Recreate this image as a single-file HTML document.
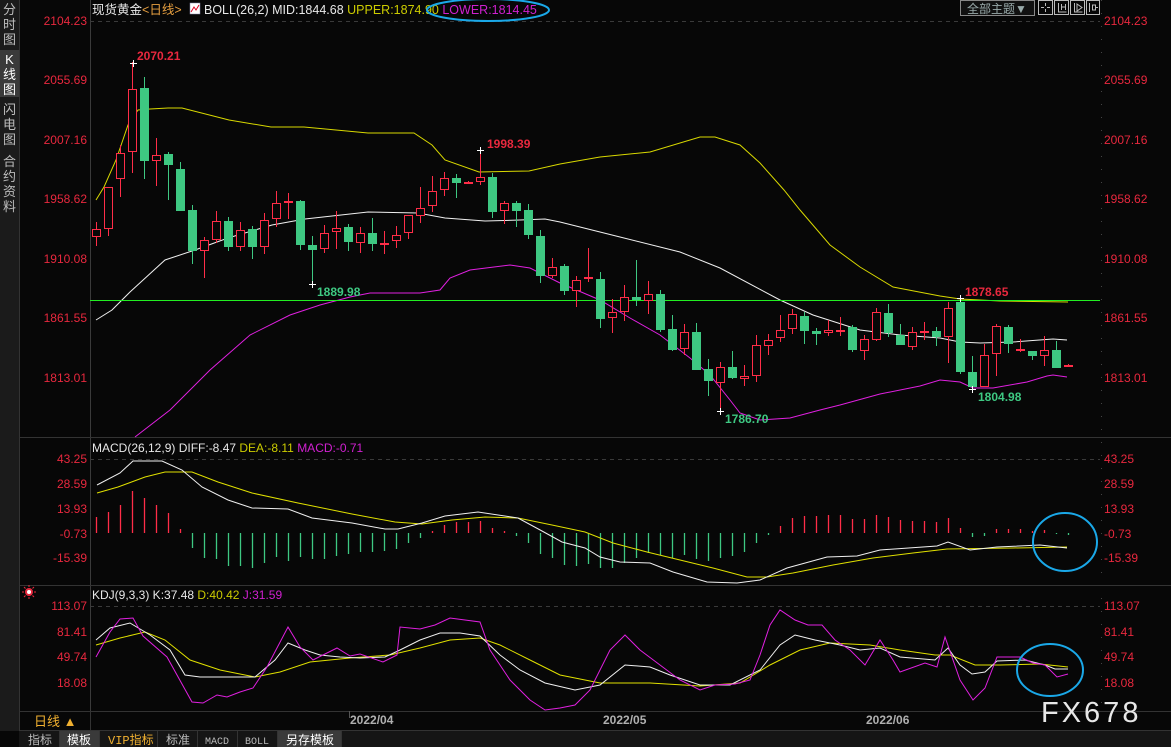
<!DOCTYPE html>
<html><head><meta charset="utf-8"><style>
body{margin:0;background:#070707;width:1171px;height:747px;overflow:hidden;font-family:"Liberation Sans","Noto Sans CJK SC",sans-serif;}
svg{display:block}
</style></head><body>
<svg id="s" width="1171" height="747" xmlns="http://www.w3.org/2000/svg" font-family="Liberation Sans, Noto Sans CJK SC, sans-serif">
<rect width="1171" height="747" fill="#070707"/>
<!-- left sidebar -->
<rect x="0" y="0" width="19" height="731" fill="#1b1b1b"/>
<rect x="0" y="50" width="19" height="47" fill="#3a3a3a"/>
<g fill="#bdbdbd" font-size="13" text-anchor="middle">
<text x="9.5" y="14">分</text><text x="9.5" y="29">时</text><text x="9.5" y="44">图</text>
<text x="9.5" y="64" fill="#fff">K</text><text x="9.5" y="79" fill="#fff">线</text><text x="9.5" y="94" fill="#fff">图</text>
<text x="9.5" y="114">闪</text><text x="9.5" y="129">电</text><text x="9.5" y="144">图</text>
<text x="9.5" y="166">合</text><text x="9.5" y="181">约</text><text x="9.5" y="196">资</text><text x="9.5" y="211">料</text>
</g>
<line x1="19.5" y1="0" x2="19.5" y2="731" stroke="#333"/>
<line x1="90.5" y1="0" x2="90.5" y2="711" stroke="#3a3a3a"/>
<line x1="1101.5" y1="0" x2="1101.5" y2="711" stroke="#444" stroke-dasharray="1,12"/>
<!-- panel separators -->
<line x1="19" y1="437.5" x2="1171" y2="437.5" stroke="#333"/>
<line x1="19" y1="585.5" x2="1171" y2="585.5" stroke="#333"/>
<line x1="19" y1="711.5" x2="1171" y2="711.5" stroke="#333"/>
<line x1="19" y1="730.5" x2="1171" y2="730.5" stroke="#333"/>
<line x1="90" y1="21.5" x2="1100" y2="21.5" stroke="#3a3a3a" stroke-dasharray="4,4"/>
<line x1="90" y1="459.5" x2="1100" y2="459.5" stroke="#3a3a3a" stroke-dasharray="4,4"/>
<line x1="90" y1="606.5" x2="1100" y2="606.5" stroke="#3a3a3a" stroke-dasharray="4,4"/>
<!-- header -->
<text x="92" y="14" font-size="12.5" fill="#e8e8e8">现货黄金<tspan fill="#e8a040">&lt;日线&gt;</tspan></text>
<rect x="190" y="3" width="10" height="11" fill="#fff" stroke="#88a" stroke-width="0.5"/>
<polyline points="191,12 194,7 196,10 199,5" fill="none" stroke="#d02" stroke-width="1"/>
<text x="204" y="14" font-size="12.5" fill="#e8e8e8">BOLL(26,2) MID:1844.68 <tspan fill="#cccc00">UPPER:1874.90</tspan> <tspan fill="#d020d0">LOWER:1814.45</tspan></text>
<ellipse cx="488" cy="10" rx="61" ry="11" fill="none" stroke="#1aa8e8" stroke-width="2"/>
<!-- top right buttons -->
<rect x="960.5" y="0.5" width="74" height="15" fill="#111" stroke="#888"/>
<text x="967" y="13" font-size="12" fill="#9aa">全部主题▼</text>
<g fill="none" stroke="#bbb">
<rect x="1038.5" y="0.5" width="14" height="14"/><rect x="1054.5" y="0.5" width="14" height="14"/><rect x="1070.5" y="0.5" width="14" height="14"/><rect x="1086.5" y="0.5" width="13" height="14"/>
<path d="M1045.5 3v3M1045.5 9v3M1041 7.5h3M1047 7.5h3"/>
<path d="M1058.5 3v9h8M1061.5 4v6M1065.5 4v6M1061.5 7h4"/>
<path d="M1074.5 3v9h8M1077 4l5 3.5-5 3.5z"/>
<path d="M1089.5 3v9M1092.5 5h3v5h-3zM1095 7.5h3"/>
</g>
<!-- axis labels -->
<g font-size="12" fill="#e8283e">
<g text-anchor="end">
<text x="87" y="25">2104.23</text><text x="87" y="84">2055.69</text><text x="87" y="144">2007.16</text><text x="87" y="203">1958.62</text><text x="87" y="263">1910.08</text><text x="87" y="322">1861.55</text><text x="87" y="382">1813.01</text>
<text x="87" y="463">43.25</text><text x="87" y="488">28.59</text><text x="87" y="513">13.93</text><text x="87" y="538">-0.73</text><text x="87" y="562">-15.39</text>
<text x="87" y="610">113.07</text><text x="87" y="636">81.41</text><text x="87" y="661">49.74</text><text x="87" y="687">18.08</text>
</g>
<text x="1104" y="25">2104.23</text><text x="1104" y="84">2055.69</text><text x="1104" y="144">2007.16</text><text x="1104" y="203">1958.62</text><text x="1104" y="263">1910.08</text><text x="1104" y="322">1861.55</text><text x="1104" y="382">1813.01</text>
<text x="1104" y="463">43.25</text><text x="1104" y="488">28.59</text><text x="1104" y="513">13.93</text><text x="1104" y="538">-0.73</text><text x="1104" y="562">-15.39</text>
<text x="1104" y="610">113.07</text><text x="1104" y="636">81.41</text><text x="1104" y="661">49.74</text><text x="1104" y="687">18.08</text>
</g>
<g id="plot"></g>
<!-- labels -->
<g font-size="12" font-weight="bold">
<text x="137" y="60" fill="#e8283e">2070.21</text>
<text x="487" y="148" fill="#e8283e">1998.39</text>
<text x="965" y="296" fill="#e8283e">1878.65</text>
<text x="317" y="296" fill="#3ec882">1889.98</text>
<text x="725" y="423" fill="#3ec882">1786.70</text>
<text x="978" y="401" fill="#3ec882">1804.98</text>
</g>
<text x="92" y="452" font-size="12" fill="#e8e8e8">MACD(26,12,9) DIFF:-8.47 <tspan fill="#cccc00">DEA:-8.11</tspan> <tspan fill="#d020d0">MACD:-0.71</tspan></text>
<text x="92" y="599" font-size="12" fill="#e8e8e8">KDJ(9,3,3) K:37.48 <tspan fill="#cccc00">D:40.42</tspan> <tspan fill="#d020d0">J:31.59</tspan></text>
<g stroke="#e8283e"><circle cx="29" cy="592" r="3" fill="#fff" stroke-width="2"/><path d="M29 585v2M29 597v2M22 592h2M34 592h2M24 587l1.5 1.5M34 587l-1.5 1.5M24 597l1.5-1.5M34 597l-1.5-1.5"/></g>
<ellipse cx="1065" cy="542" rx="32" ry="29" fill="none" stroke="#1aa8e8" stroke-width="2"/>
<ellipse cx="1050" cy="670" rx="33" ry="26" fill="none" stroke="#1aa8e8" stroke-width="2"/>
<!-- date axis -->
<text x="34" y="726" font-size="13" fill="#f0b030">日线 ▲</text>
<line x1="90.5" y1="711" x2="90.5" y2="731" stroke="#333"/>
<line x1="349.5" y1="711" x2="349.5" y2="718" stroke="#555"/>
<g font-size="12" font-weight="bold" fill="#b0b0b0">
<text x="350" y="724">2022/04</text><text x="603" y="724">2022/05</text><text x="866" y="724">2022/06</text>
</g>
<text x="1041" y="722" font-size="29" fill="#e8e8e8" letter-spacing="3">FX678</text>
<!-- tabs -->
<rect x="19" y="731" width="1152" height="16" fill="#151515"/>
<rect x="60" y="731" width="39" height="16" fill="#3a3a3a"/>
<rect x="278" y="731" width="63" height="16" fill="#3a3a3a"/>
<g stroke="#333"><line x1="59.5" y1="731" x2="59.5" y2="747"/><line x1="99.5" y1="731" x2="99.5" y2="747"/><line x1="157.5" y1="731" x2="157.5" y2="747"/><line x1="197.5" y1="731" x2="197.5" y2="747"/><line x1="237.5" y1="731" x2="237.5" y2="747"/><line x1="277.5" y1="731" x2="277.5" y2="747"/><line x1="341.5" y1="731" x2="341.5" y2="747"/></g>
<g font-size="12" fill="#bbb">
<text x="28" y="744">指标</text><text x="67" y="744" fill="#fff">模板</text><text x="108" y="744" fill="#f0b030" font-family="Liberation Mono, Noto Sans CJK SC, monospace">VIP指标</text><text x="166" y="744">标准</text><text x="205" y="744" font-size="10" font-family="Liberation Mono, monospace">MACD</text><text x="245" y="744" font-size="10" font-family="Liberation Mono, monospace">BOLL</text><text x="286" y="744" fill="#fff">另存模板</text>
</g>
</svg>
<script>
var NS="http://www.w3.org/2000/svg",g=document.getElementById("plot"),h="";
function pl(p,c){h+='<polyline fill="none" stroke="'+c+'" stroke-width="1" points="'+p+'"/>';}
// candles: x, top, bottom, high, low, type
var C=[[96,229,237,222,246,'r'],[108,187,229,187,236,'r'],[120,153,179,145,197,'r'],[132,89,152,62,173,'r'],[144,88,161,77,179,'g'],[156,155,161,138,186,'r'],[168,154,165,152,200,'g'],[180,169,211,162,211,'g'],[192,210,251,205,264,'g'],[204,240,251,237,278,'r'],[216,221,240,211,243,'r'],[228,221,247,217,251,'g'],[240,230,247,222,251,'r'],[252,229,247,226,259,'g'],[264,220,247,213,254,'r'],[276,203,219,191,227,'r'],[288,201,203,193,219,'r'],[300,201,245,200,250,'g'],[312,245,250,236,284,'g'],[324,233,249,225,253,'r'],[336,228,232,211,249,'r'],[348,227,242,224,251,'g'],[360,233,243,227,253,'r'],[372,233,244,218,251,'g'],[384,243,244,231,254,'r'],[396,235,241,226,248,'r'],[408,215,233,215,239,'r'],[420,208,216,187,223,'r'],[432,191,206,176,212,'r'],[444,178,190,172,196,'r'],[456,178,183,174,198,'g'],[468,182,183,181,184,'r'],[480,177,182,150,185,'r'],[492,177,212,173,218,'g'],[504,203,211,201,224,'r'],[516,203,211,201,227,'g'],[528,210,235,204,239,'g'],[540,236,276,230,283,'g'],[552,267,276,258,278,'r'],[564,266,291,264,295,'g'],[576,280,291,276,307,'r'],[588,277,279,248,282,'r'],[600,279,319,272,328,'g'],[612,312,318,299,333,'r'],[624,297,312,285,321,'r'],[636,297,300,260,306,'g'],[648,294,301,281,314,'r'],[660,294,330,290,332,'g'],[672,329,350,315,351,'g'],[684,332,349,324,355,'r'],[696,332,370,323,370,'g'],[708,369,381,359,396,'g'],[720,367,383,362,411,'r'],[732,367,378,351,379,'g'],[744,376,379,365,386,'r'],[756,345,376,335,382,'r'],[768,340,346,334,355,'r'],[780,330,338,315,342,'r'],[792,314,329,309,334,'r'],[804,316,331,312,344,'g'],[816,331,334,328,345,'g'],[828,330,333,320,336,'r'],[840,330,331,317,336,'r'],[852,327,350,325,352,'g'],[864,339,351,335,360,'r'],[876,312,340,308,341,'r'],[888,313,333,304,337,'g'],[900,335,345,324,345,'g'],[912,332,347,327,350,'r'],[924,331,333,322,340,'r'],[936,331,337,327,346,'g'],[948,308,337,302,363,'r'],[960,302,372,298,374,'g'],[972,372,387,356,389,'g'],[984,355,387,344,387,'r'],[996,326,354,324,376,'r'],[1008,327,344,325,353,'g'],[1020,349,350,339,352,'r'],[1032,351,356,351,360,'g'],[1044,350,356,336,366,'r'],[1056,350,368,341,368,'g'],[1068,365,367,364,367,'r']];
// bollinger
pl("96,200 104,187 116,160 128,125 138,110 150,109 168,108 182,108 229,120 271,127 304,127 368,133 414,133 432,145 445,160 479,172 529,171 560,164 600,157 650,152 700,137 715,137 740,145 760,163 784,190 800,210 830,245 860,267 893,287 940,296 960,299 1000,301 1068,302","#d8d800");
pl("96,320 112,310 130,292 165,260 195,250 228,238 272,225 305,219 368,212 418,213 445,218 485,221 520,220 545,219 560,222 620,237 680,252 720,268 780,300 813,315 860,330 900,335 940,338 960,342 980,343 1013,342 1053,339 1067,340","#f0f0f0");
pl("135,437 170,410 210,370 250,335 290,315 320,305 350,297 370,293 420,293 440,290 450,278 470,270 510,265 530,268 560,283 600,300 630,318 660,335 690,358 710,375 730,400 740,413 760,420 790,418 820,410 840,405 880,394 920,386 940,380 960,382 973,388 993,388 1027,382 1047,376 1053,375 1067,377","#e020e0");
h+='<line x1="90" y1="300.5" x2="1100" y2="300.5" stroke="#22ee22"/>';
C.forEach(function(c){var x=c[0],col=c[5]=='r'?'#ff2d48':'#3ec882';var bh=Math.max(1,c[2]-c[1]);
if(c[5]=='r'){h+='<line x1="'+(x+.5)+'" y1="'+c[3]+'" x2="'+(x+.5)+'" y2="'+c[1]+'" stroke="'+col+'"/><line x1="'+(x+.5)+'" y1="'+(c[1]+bh)+'" x2="'+(x+.5)+'" y2="'+c[4]+'" stroke="'+col+'"/>';
h+= bh<=2?'<rect x="'+(x-4)+'" y="'+c[1]+'" width="9" height="2" fill="'+col+'"/>':'<rect x="'+(x-3.5)+'" y="'+(c[1]+.5)+'" width="8" height="'+(bh-1)+'" fill="#070707" stroke="'+col+'"/>';}
else{h+='<line x1="'+(x+.5)+'" y1="'+c[3]+'" x2="'+(x+.5)+'" y2="'+c[4]+'" stroke="'+col+'"/><rect x="'+(x-4)+'" y="'+c[1]+'" width="9" height="'+bh+'" fill="'+col+'"/>';}});
// extreme crosses
[[133,63],[480,150],[312,284],[720,411],[960,298],[972,389]].forEach(function(p){h+='<path d="M'+(p[0]-3)+' '+(p[1]+.5)+'h7M'+(p[0]+.5)+' '+(p[1]-3)+'v7" stroke="#fff"/>';});
// macd bars
var M=[[96,517],[108,512],[120,505],[132,491],[144,498],[156,505],[168,513],[180,529],[192,548],[204,558],[216,559],[228,566],[240,566],[252,568],[264,563],[276,557],[288,561],[300,557],[312,559],[324,559],[336,556],[348,554],[360,552],[372,552],[384,551],[396,549],[408,543],[420,538],[432,531],[444,525],[456,522],[468,522],[480,521],[492,528],[504,531],[516,536],[528,543],[540,554],[552,558],[564,565],[576,566],[588,564],[600,568],[612,568],[624,563],[636,558],[648,553],[660,555],[672,558],[684,555],[696,559],[708,561],[720,558],[732,556],[744,552],[756,543],[768,535],[780,526],[792,518],[804,516],[816,516],[828,515],[840,515],[852,519],[864,519],[876,515],[888,517],[900,520],[912,521],[924,521],[936,522],[948,518],[960,528],[972,537],[984,536],[996,529],[1008,529],[1020,529],[1032,531],[1044,530],[1056,534],[1068,535]];
M.forEach(function(m){var z=533,col=m[1]<z?'#ff2d48':'#3ec882';var a=Math.min(z,m[1]),b=Math.max(z,m[1]);if(b-a<1)b=a+1;h+='<line x1="'+(m[0]+.5)+'" y1="'+a+'" x2="'+(m[0]+.5)+'" y2="'+b+'" stroke="'+col+'" stroke-width="1.3"/>';});
pl("97,493 118,487 145,477 165,472 192,472 218,482 252,493 298,503 352,514 395,522 422,524 452,520 485,517 518,518 552,525 585,532 613,543 647,552 680,560 713,568 747,577 767,577 793,573 833,565 873,558 913,553 947,549 1013,548 1067,547","#e0e000");
pl("97,485 120,473 133,461 162,461 182,470 202,487 228,500 252,508 288,509 312,518 352,523 385,529 398,529 422,523 445,516 478,512 518,518 542,531 562,542 585,548 600,557 620,562 650,563 673,572 707,582 737,583 760,580 787,568 827,557 857,556 880,550 937,546 948,542 970,550 997,547 1040,545 1067,548","#f0f0f0");
// kdj
pl("96,645 120,638 145,632 165,640 190,660 220,670 255,677 280,672 310,662 350,658 390,655 420,648 450,640 480,638 500,645 530,660 560,675 600,683 650,683 700,686 740,683 770,665 800,650 830,643 870,645 900,650 935,655 950,655 975,665 1000,665 1040,664 1068,667","#e0e000");
pl("96,640 110,628 130,623 150,635 170,650 185,675 200,677 230,677 255,677 275,660 288,643 305,650 320,655 340,657 360,658 385,657 400,650 420,640 440,633 460,633 480,636 500,655 520,670 545,683 575,690 600,685 625,665 650,667 670,675 700,685 730,685 760,670 780,645 795,635 815,640 840,645 860,650 880,648 900,657 935,660 948,648 960,665 972,674 985,672 997,661 1025,660 1045,665 1055,669 1068,669","#f0f0f0");
pl("96,657 110,632 120,619 133,618 143,636 167,657 192,702 203,703 217,695 227,697 240,692 253,688 267,667 288,627 300,647 313,660 337,648 350,656 360,654 383,662 397,655 400,627 420,629 435,625 450,618 465,620 480,622 490,650 510,680 530,700 545,710 560,708 575,705 590,690 610,650 625,635 640,650 660,665 680,680 700,690 715,685 735,684 750,680 760,655 770,625 780,610 795,620 808,625 822,625 835,640 850,650 865,665 880,640 893,660 900,672 925,663 937,667 945,637 960,680 973,700 985,688 997,657 1020,657 1033,663 1045,665 1057,677 1068,674","#e020e0");
g.innerHTML=h;
</script>
</body></html>
